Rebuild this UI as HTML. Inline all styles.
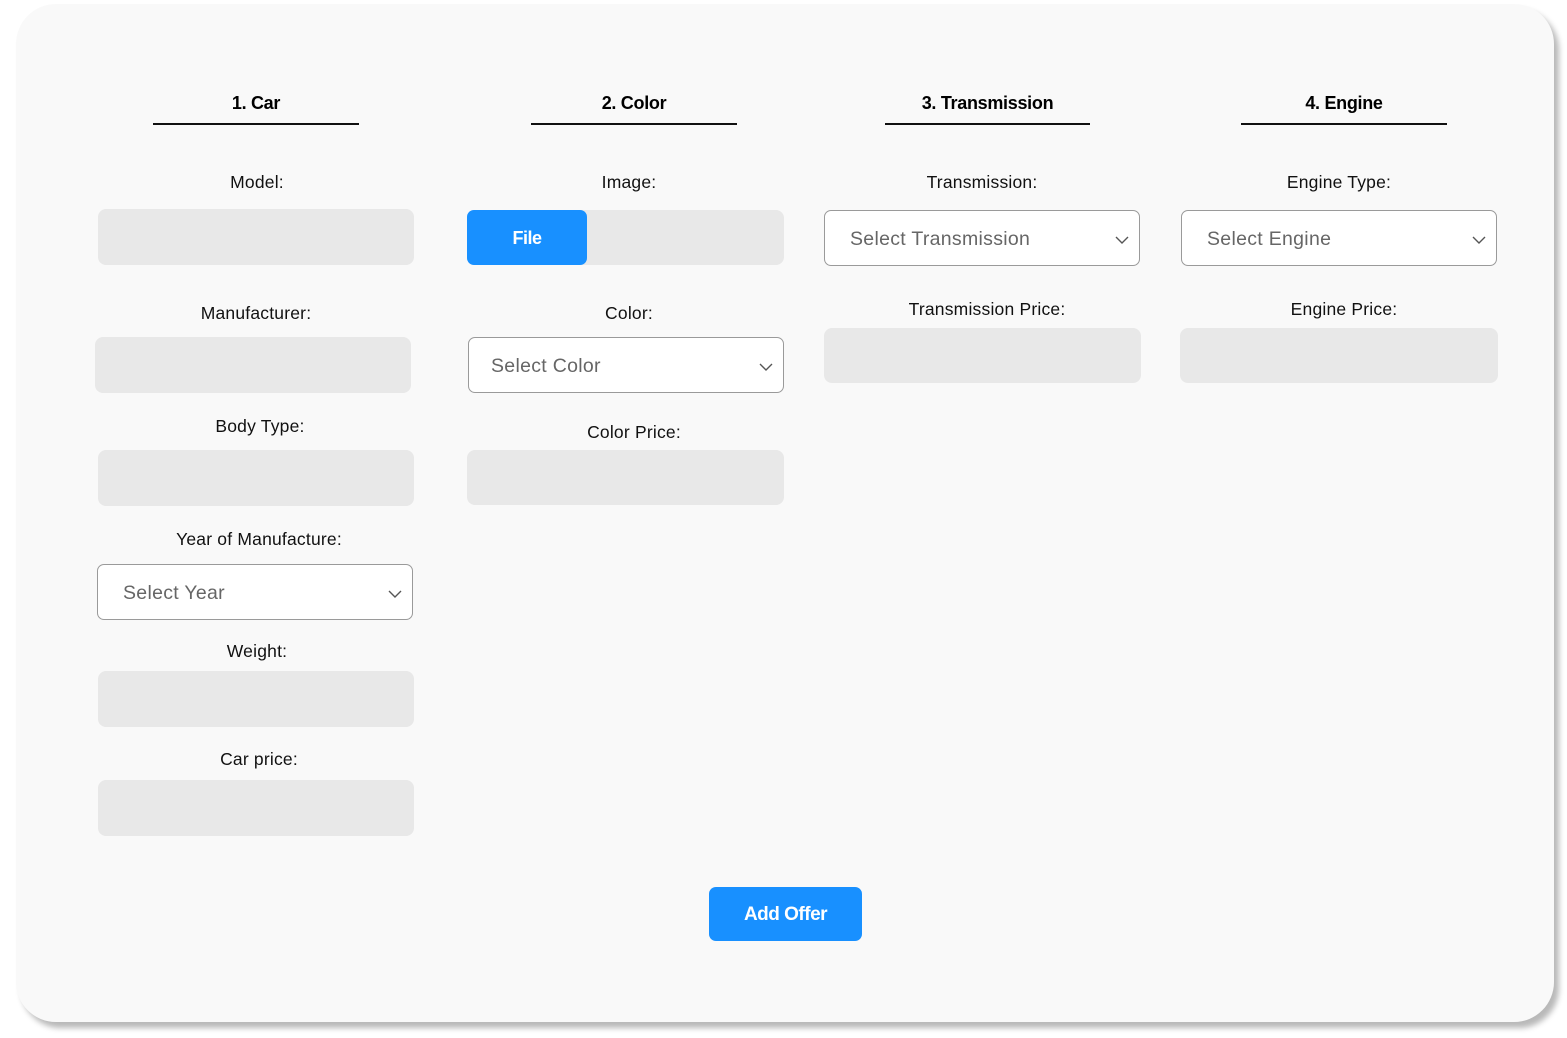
<!DOCTYPE html>
<html><head><meta charset="utf-8"><style>
html,body{margin:0;padding:0;width:1567px;height:1038px;background:#fff;overflow:hidden;font-family:"Liberation Sans",Arial,sans-serif;}
.card{position:absolute;left:16px;top:4px;width:1538px;height:1018px;background:#f9f9f9;border-radius:40px;box-shadow:5px 6px 6px rgba(0,0,0,0.28);}
.h{position:absolute;font-weight:bold;font-size:18px;color:#000;text-align:center;height:22px;line-height:22px;letter-spacing:-0.3px;}
.u{position:absolute;height:2px;background:#111;}
.l{position:absolute;font-size:17.5px;color:#111;text-align:center;width:400px;line-height:20px;letter-spacing:0.2px;}
.in{position:absolute;background:#e8e8e8;border-radius:8px;}
.sel{position:absolute;background:#fff;border:1px solid #9a9a9a;border-radius:7px;box-sizing:border-box;font-size:19.5px;color:#666;line-height:57px;padding-left:25px;letter-spacing:0.3px;}
.sel svg{position:absolute;right:10px;top:25px;}
.btn{position:absolute;background:#1890ff;color:#fff;font-weight:bold;border-radius:7px;text-align:center;letter-spacing:-0.5px;}
</style></head><body>
<div class="card"></div>

<div class="h" style="left:153px;width:206px;top:92px">1. Car</div><div class="u" style="left:153px;width:206px;top:123px"></div>
<div class="h" style="left:531px;width:206px;top:92px">2. Color</div><div class="u" style="left:531px;width:206px;top:123px"></div>
<div class="h" style="left:885px;width:205px;top:92px">3. Transmission</div><div class="u" style="left:885px;width:205px;top:123px"></div>
<div class="h" style="left:1241px;width:206px;top:92px">4. Engine</div><div class="u" style="left:1241px;width:206px;top:123px"></div>

<div class="l" style="left:57px;top:172px">Model:</div>
<div class="in" style="left:98px;top:209px;width:316px;height:56px"></div>
<div class="l" style="left:56px;top:303px">Manufacturer:</div>
<div class="in" style="left:95px;top:337px;width:316px;height:56px"></div>
<div class="l" style="left:60px;top:416px">Body Type:</div>
<div class="in" style="left:98px;top:450px;width:316px;height:56px"></div>
<div class="l" style="left:59px;top:529px">Year of Manufacture:</div>
<div class="sel" style="left:97px;top:564px;width:316px;height:56px">Select Year<svg width="14" height="8"><path d="M1 1l6 6 6-6" stroke="#555" stroke-width="1.4" fill="none"/></svg></div>
<div class="l" style="left:57px;top:641px">Weight:</div>
<div class="in" style="left:98px;top:671px;width:316px;height:56px"></div>
<div class="l" style="left:59px;top:749px">Car price:</div>
<div class="in" style="left:98px;top:780px;width:316px;height:56px"></div>

<div class="l" style="left:429px;top:172px">Image:</div>
<div class="in" style="left:467px;top:210px;width:317px;height:55px"></div>
<div class="btn" style="left:467px;top:210px;width:120px;height:55px;line-height:56px;font-size:18px">File</div>
<div class="l" style="left:429px;top:303px">Color:</div>
<div class="sel" style="left:468px;top:337px;width:316px;height:56px;padding-left:22px">Select Color<svg width="14" height="8"><path d="M1 1l6 6 6-6" stroke="#555" stroke-width="1.4" fill="none"/></svg></div>
<div class="l" style="left:434px;top:422px">Color Price:</div>
<div class="in" style="left:467px;top:450px;width:317px;height:55px"></div>

<div class="l" style="left:782px;top:172px">Transmission:</div>
<div class="sel" style="left:824px;top:210px;width:316px;height:56px">Select Transmission<svg width="14" height="8"><path d="M1 1l6 6 6-6" stroke="#555" stroke-width="1.4" fill="none"/></svg></div>
<div class="l" style="left:787px;top:299px">Transmission Price:</div>
<div class="in" style="left:824px;top:328px;width:317px;height:55px"></div>

<div class="l" style="left:1139px;top:172px">Engine Type:</div>
<div class="sel" style="left:1181px;top:210px;width:316px;height:56px">Select Engine<svg width="14" height="8"><path d="M1 1l6 6 6-6" stroke="#555" stroke-width="1.4" fill="none"/></svg></div>
<div class="l" style="left:1144px;top:299px">Engine Price:</div>
<div class="in" style="left:1180px;top:328px;width:318px;height:55px"></div>

<div class="btn" style="left:709px;top:887px;width:153px;height:54px;line-height:55px;font-size:19px">Add Offer</div>
</body></html>
